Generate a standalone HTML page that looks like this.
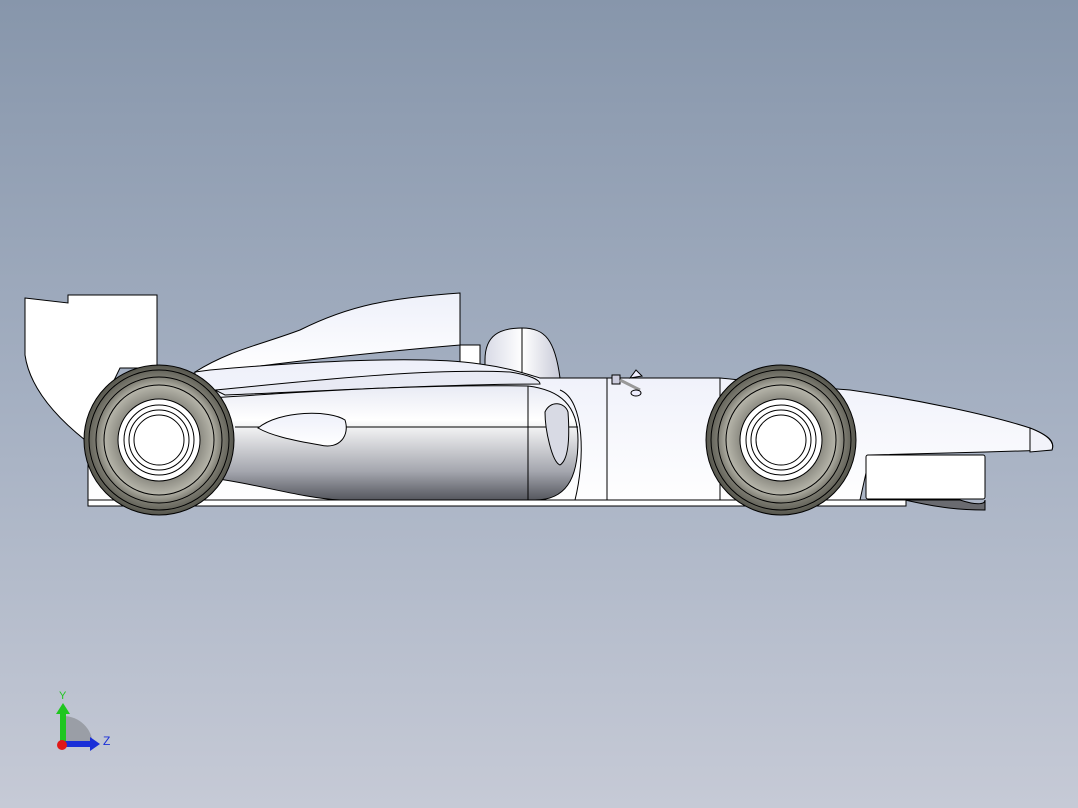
<!DOCTYPE html>
<html><head><meta charset="utf-8"><style>
html,body{margin:0;padding:0;width:1078px;height:808px;overflow:hidden}
body{background:linear-gradient(#8796ab 0%,#a5b0c2 50%,#c6cad6 100%);font-family:"Liberation Sans",sans-serif}
svg{position:absolute;left:0;top:0}
</style></head><body>
<svg width="1078" height="808" viewBox="0 0 1078 808">
<defs>
<linearGradient id="pod" x1="0" y1="0" x2="0" y2="1">
<stop offset="0" stop-color="#e8eaf4"/><stop offset="0.3" stop-color="#ffffff"/><stop offset="0.75" stop-color="#a4a6ae"/><stop offset="1" stop-color="#55575e"/></linearGradient>
<linearGradient id="wh" x1="0" y1="0" x2="0" y2="1">
<stop offset="0" stop-color="#eef0fa"/><stop offset="1" stop-color="#ffffff"/></linearGradient>
<radialGradient id="tyre" cx="0.5" cy="0.5" r="0.5">
<stop offset="0.55" stop-color="#8e8d84"/><stop offset="0.72" stop-color="#b4b3a8"/><stop offset="0.85" stop-color="#7a796f"/><stop offset="1" stop-color="#55554c"/></radialGradient>
<linearGradient id="helm" x1="0" y1="0" x2="1" y2="0">
<stop offset="0" stop-color="#d8dae6"/><stop offset="0.5" stop-color="#ffffff"/><stop offset="1" stop-color="#c8cad8"/></linearGradient>
</defs>
<g stroke="#000" stroke-width="1" fill="#fff">
<path d="M25,298 L68,303 L68,295 L157,295 L157,368 L120,368 L85,440 C60,420 30,390 25,355 Z"/>
<path d="M195,372 C230,350 260,345 300,330 C350,305 390,298 460,293 L460,345 C400,350 300,360 215,372 Z" fill="url(#wh)"/>
<rect x="460" y="345" width="20" height="20" fill="#fff"/>
<path d="M485,360 C485,335 500,328 522,328 C545,328 555,340 560,378 L485,378 Z" fill="url(#helm)"/>
<line x1="522" y1="328" x2="522" y2="378"/>
<path d="M195,372 L210,370 C300,362 420,355 480,364 C510,368 530,375 540,378 L720,378 C760,382 820,388 850,390 C920,400 990,415 1030,428 C1050,436 1055,442 1052,450 L985,452 L870,455 L860,500 L905,505 L88,505 L88,440 L195,440 Z" fill="url(#wh)"/>
<path d="M1030,428 C1048,435 1055,442 1052,450 L1030,452 Z" fill="#f2f3fa"/>
<path d="M215,390 C300,382 420,368 510,372 C530,375 540,380 540,384 C450,384 300,392 225,395 Z" fill="#e8eaf4"/>
<path d="M210,398 C300,392 420,384 528,386 C560,390 578,405 578,440 C578,480 565,500 535,500 L340,500 C300,498 250,482 210,478 Z" fill="url(#pod)"/>
<line x1="528" y1="386" x2="528" y2="500"/>
<line x1="235" y1="427" x2="578" y2="427"/>
<path d="M258,428 C280,410 330,410 345,420 C350,435 340,450 320,445 C290,440 270,435 258,428 Z" fill="url(#wh)"/>
<path d="M545,412 C550,400 565,402 568,412 C570,440 568,460 560,465 C552,462 545,430 545,412 Z" fill="#d8dae4"/>
<path d="M560,390 C585,400 585,460 575,500" fill="none"/>
<line x1="607" y1="378" x2="607" y2="505"/>
<line x1="720" y1="378" x2="720" y2="505"/>
<path d="M612,375 L620,375 L620,384 L612,384 Z" fill="#ccd"/>
<path d="M620,380 L640,390" stroke-width="3" stroke="#999"/>
<path d="M630,378 L642,376 L636,370 Z" fill="#eef"/>
<ellipse cx="636" cy="393" rx="5" ry="3" fill="#eef"/>
<rect x="866" y="455" width="119" height="44" rx="2" fill="#fff"/>
<path d="M905,500 L960,500 C975,505 985,505 985,500 L985,510 C960,510 940,508 905,500 Z" fill="#6a6b70"/>
<rect x="88" y="500" width="818" height="6" fill="#fff"/>
<g>
<ellipse cx="159" cy="440" rx="75" ry="75" fill="url(#tyre)"/>
<ellipse cx="159" cy="440" rx="70" ry="70" fill="none"/>
<ellipse cx="159" cy="440" rx="63" ry="63" fill="none"/>
<ellipse cx="159" cy="440" rx="55" ry="55" fill="none"/>
<circle cx="159" cy="440" r="41" fill="#fff"/>
<circle cx="159" cy="440" r="35" fill="none"/>
<circle cx="159" cy="440" r="30" fill="none"/>
<circle cx="159" cy="440" r="25" fill="none"/>
</g>
<g>
<ellipse cx="781" cy="440" rx="75" ry="75" fill="url(#tyre)"/>
<ellipse cx="781" cy="440" rx="70" ry="70" fill="none"/>
<ellipse cx="781" cy="440" rx="63" ry="63" fill="none"/>
<ellipse cx="781" cy="440" rx="55" ry="55" fill="none"/>
<circle cx="781" cy="440" r="41" fill="#fff"/>
<circle cx="781" cy="440" r="35" fill="none"/>
<circle cx="781" cy="440" r="30" fill="none"/>
<circle cx="781" cy="440" r="25" fill="none"/>
</g>
</g>
<path d="M63,745 L63,716 A30,30 0 0 1 93,745 Z" fill="#9a9ea6"/>
<rect x="60" y="712" width="6" height="33" fill="#1fc61f"/>
<polygon points="56,714 63,703 70,714" fill="#1fc61f"/>
<rect x="63" y="741" width="28" height="6" fill="#1a2fd8"/>
<polygon points="90,737 100,744 90,751" fill="#1a2fd8"/>
<circle cx="62" cy="745" r="5" fill="#e01818"/>
<text x="59" y="699" font-size="11" fill="#1fc61f">Y</text>
<text x="103" y="745" font-size="12" fill="#1a2fd8">Z</text>
</svg>
</body></html>
